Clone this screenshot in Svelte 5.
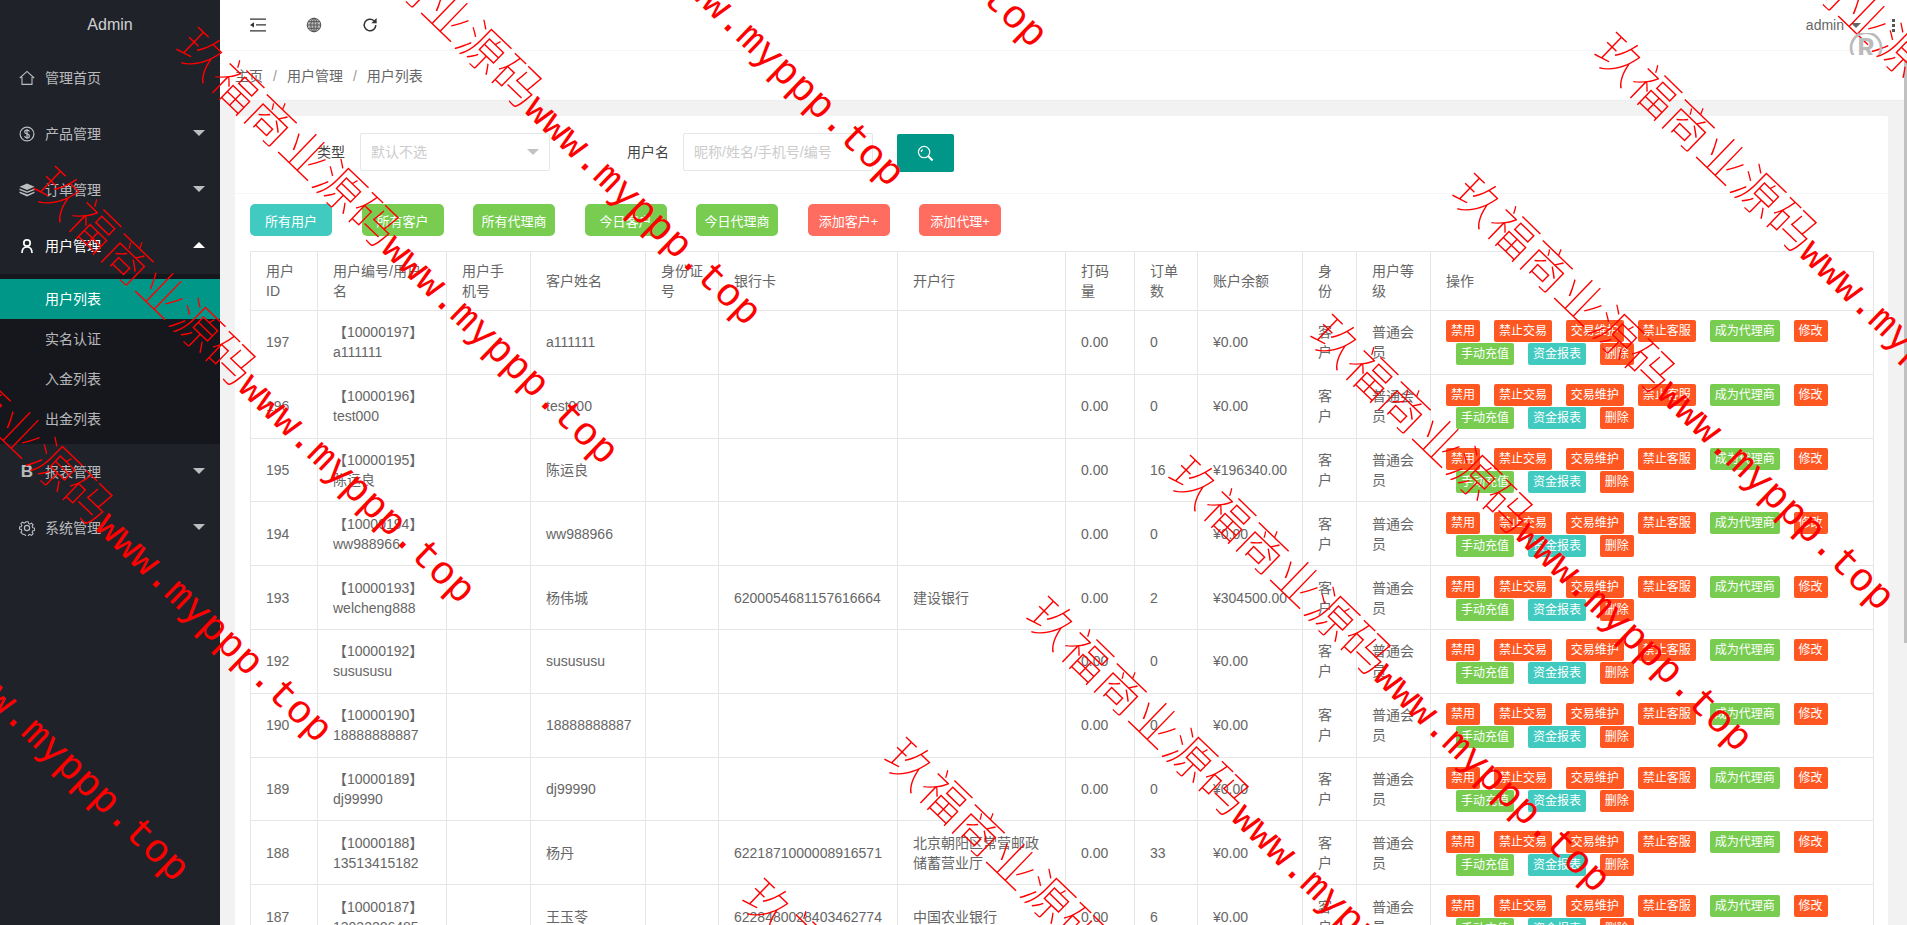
<script>
  const sideMenu = [
    { name: "管理首页", icon: "home" },
    { name: "产品管理", icon: "dollar", arrow: "down" },
    { name: "订单管理", icon: "layers", arrow: "down" },
    { name: "用户管理", icon: "user", arrow: "up", open: true },
    { name: "报表管理", icon: "bold", arrow: "down" },
    { name: "系统管理", icon: "gear", arrow: "down" },
  ];
  const subMenu = ["用户列表", "实名认证", "入金列表", "出金列表"];

  const filters = [
    { label: "所有用户", tone: "mint" },
    { label: "所有客户", tone: "green" },
    { label: "所有代理商", tone: "green" },
    { label: "今日客户", tone: "green" },
    { label: "今日代理商", tone: "green" },
    { label: "添加客户+", tone: "coral" },
    { label: "添加代理+", tone: "coral" },
  ];

  const headers = [
    ["用户ID", 67],
    ["用户编号/用户名", 129],
    ["用户手机号", 84],
    ["客户姓名", 115],
    ["身份证号", 73],
    ["银行卡", 179],
    ["开户行", 168],
    ["打码量", 69],
    ["订单数", 63],
    ["账户余额", 105],
    ["身份", 54],
    ["用户等级", 74],
    ["操作", 443],
  ];

  const users = [
    { id: 197, code: "10000197", login: "a111111", name: "a111111", card: "", bank: "", orders: 0, balance: "0.00" },
    { id: 196, code: "10000196", login: "test000", name: "test000", card: "", bank: "", orders: 0, balance: "0.00" },
    { id: 195, code: "10000195", login: "陈运良", name: "陈运良", card: "", bank: "", orders: 16, balance: "196340.00" },
    { id: 194, code: "10000194", login: "ww988966", name: "ww988966", card: "", bank: "", orders: 0, balance: "0.00" },
    { id: 193, code: "10000193", login: "welcheng888", name: "杨伟城", card: "6200054681157616664", bank: "建设银行", orders: 2, balance: "304500.00" },
    { id: 192, code: "10000192", login: "susususu", name: "susususu", card: "", bank: "", orders: 0, balance: "0.00" },
    { id: 190, code: "10000190", login: "18888888887", name: "18888888887", card: "", bank: "", orders: 0, balance: "0.00" },
    { id: 189, code: "10000189", login: "dj99990", name: "dj99990", card: "", bank: "", orders: 0, balance: "0.00" },
    { id: 188, code: "10000188", login: "13513415182", name: "杨丹", card: "6221871000008916571", bank: "北京朝阳区常营邮政储蓄营业厅", orders: 33, balance: "0.00" },
    { id: 187, code: "10000187", login: "13032206485", name: "王玉苓", card: "6228480028403462774", bank: "中国农业银行", orders: 6, balance: "0.00" },
  ];

  const actions = [
    { label: "禁用", tone: "orange" },
    { label: "禁止交易", tone: "orange" },
    { label: "交易维护", tone: "orange" },
    { label: "禁止客服", tone: "orange" },
    { label: "成为代理商", tone: "green" },
    { label: "修改", tone: "orange" },
    { label: "手动充值", tone: "green" },
    { label: "资金报表", tone: "mint" },
    { label: "删除", tone: "orange" },
  ];

  // watermark tiles repeat on a diagonal grid
  const marks = [];
  for (let i = -3; i < 5; i++) {
    marks.push({ x: 200 - i * 143, y: 50 + i * 139 });
  }
  for (let i = -2; i < 7; i++) {
    marks.push({ x: 1618 - i * 142, y: 55 + i * 141 });
  }
</script>

<div class="page">
  <aside class="side">
    <div class="logo">Admin</div>
    <ul class="menu">
      {#each sideMenu as item}
        <li class:open={item.open}>
          <div class="menu-row">
            <span class="menu-icon">
              {#if item.icon === "home"}
                <svg viewBox="0 0 16 16" width="16" height="16" fill="none" stroke="currentColor" stroke-width="1.1"><path d="M.8 8 8 1.4 15.2 8M3 7v7.400h10V7" /></svg>
              {:else if item.icon === "dollar"}
                <svg viewBox="0 0 16 16" width="16" height="16" fill="none" stroke="currentColor" stroke-width="1.2"><circle cx="8" cy="8" r="6.900" /><path d="M10.400 5.600C10 4.500 9 4.200 8 4.200c-1.300 0-2.300.7-2.300 1.800 0 2.500 4.700 1.300 4.700 3.900 0 1.100-1 1.900-2.400 1.900-1.200 0-2.200-.5-2.500-1.600M8 2.900v10.200" /></svg>
              {:else if item.icon === "layers"}
                <svg viewBox="0 0 16 16" width="16" height="16" fill="currentColor"><path d="M8 1.500 15.500 4.800 8 8 .5 4.800zM.5 6.500 8 9.600l7.500-3.100v1.500L8 11.100.5 8zm0 3 8 3.100 7-3.100V11L8 14.500.5 11z" /></svg>
              {:else if item.icon === "user"}
                <svg viewBox="0 0 16 16" width="16" height="16" fill="none" stroke="currentColor" stroke-width="1.700"><circle cx="8" cy="5" r="3.200" /><path d="M3 15c0-3.500 1.800-6 5-6s5 2.500 5 6" /></svg>
              {:else if item.icon === "bold"}
                <b class="bold-icon">B</b>
              {:else}
                <svg viewBox="0 0 16 16" width="16" height="16" fill="none" stroke="currentColor" stroke-width="1.200"><circle cx="8" cy="8" r="2.600" /><path d="M6.700 1h2.600l.4 2 1.500.7 1.800-1.100 1.800 1.800-1.100 1.800.7 1.500 2 .4v2.600l-2 .4-.7 1.500 1.100 1.800-1.800 1.800-1.800-1.100-1.500.7-.4 2H6.700l-.4-2-1.500-.7L3 14.600l-1.800-1.800 1.100-1.800-.7-1.500-2-.4V6.900l2-.4.7-1.500L1.200 3.200 3 1.400l1.800 1.100 1.500-.7z" transform="translate(.8 .8) scale(.9)" /></svg>
              {/if}
            </span>
            <span>{item.name}</span>
            {#if item.arrow}
              <i class="caret {item.arrow}"></i>
            {/if}
          </div>
          {#if item.open}
            <dl class="submenu">
              {#each subMenu as sub, i}
                <dd class:active={i === 0}>{sub}</dd>
              {/each}
            </dl>
          {/if}
        </li>
      {/each}
    </ul>
  </aside>

  <main class="main">
    <header class="topbar">
      <div class="tools">
        <svg viewBox="0 0 16 16" width="16" height="16" fill="#333"><path d="M0 1.500h16v1.300H0zM6 7.300h10v1.300H6zM0 13.200h16v1.300H0zM4 5.300v5.300L0 8z" /></svg>
        <svg viewBox="0 0 16 16" width="16" height="16" fill="#bbb" stroke="#555" stroke-width="1"><circle cx="8" cy="8" r="6.800" /><ellipse cx="8" cy="8" rx="3.200" ry="6.800" fill="none" /><path d="M8 1.200v13.600M1.200 8h13.600M2.200 4.700h11.600M2.200 11.300h11.600" /></svg>
        <svg viewBox="0 0 16 16" width="16" height="16" fill="none" stroke="#333" stroke-width="1.500"><path d="M13.800 8a5.800 5.800 0 1 1-1.800-4.200L14 5.700" /><path d="M14.600 1v5.300H9.300" fill="#333" stroke="none" /></svg>
      </div>
      <div class="account">
        <span>admin</span>
        <i class="caret-user"></i>
        <span class="dots"><i></i><i></i><i></i></span>
      </div>
      <div class="reg-mark">®</div>
    </header>

    <nav class="crumb">
      <span>主页</span><i>/</i><span>用户管理</span><i>/</i><span>用户列表</span>
    </nav>

    <section class="body">
      <div class="card">
        <form class="search">
          <span class="field-label type-label">类型</span>
          <div class="input select">默认不选<i class="caret-select"></i></div>
          <span class="field-label name-label">用户名</span>
          <div class="input">昵称/姓名/手机号/编号</div>
          <button type="button" class="search-btn" aria-label="搜索">
            <svg viewBox="0 0 18 18" width="17" height="17" fill="none" stroke="#fff" stroke-width="1.300"><circle cx="7.500" cy="7.500" r="6" /><path d="M4.500 7.500a3 3 0 0 1 1.500-2.600" /><path d="m12 12 4.500 4.500" stroke-width="2.200" /></svg>
          </button>
        </form>

        <div class="card-body">
          <div class="filters">
            {#each filters as f}
              <button type="button" class="filter {f.tone}">{f.label}</button>
            {/each}
          </div>

          <table>
            <colgroup>
              {#each headers as h}
                <col style={`width: ${h[1]}px`} />
              {/each}
            </colgroup>
            <thead>
              <tr>
                {#each headers as h}
                  <th>{h[0]}</th>
                {/each}
              </tr>
            </thead>
            <tbody>
              {#each users as u}
                <tr>
                  <td>{u.id}</td>
                  <td>【{u.code}】<br />{u.login}</td>
                  <td></td>
                  <td>{u.name}</td>
                  <td></td>
                  <td>{u.card}</td>
                  <td>{u.bank}</td>
                  <td>0.00</td>
                  <td>{u.orders}</td>
                  <td>¥{u.balance}</td>
                  <td>客户</td>
                  <td>普通会员</td>
                  <td class="ops">
                    {#each actions as a}
                      <span class="tag {a.tone}">{a.label}</span>{" "}
                    {/each}
                  </td>
                </tr>
              {/each}
            </tbody>
          </table>
        </div>
      </div>
    </section>
  </main>

  <div class="scrollbar"></div>

  <div class="watermarks" aria-hidden="true">
    {#each marks as m}
      <span class="mark" style={`left: ${m.x}px; top: ${m.y}px`}><span class="mark-cn">玖福商业源码</span>www.myppp.top</span>
    {/each}
  </div>
</div>

<style>
  :global(body) {
    margin: 0;
    overflow: hidden;
  }

  .page {
    position: relative;
    display: flex;
    width: 1907px;
    height: 925px;
    overflow: hidden;
    background: #f2f2f2;
    color: #666;
    font: 14px/20px "Liberation Sans", "Noto Sans CJK SC", sans-serif;
  }

  .side {
    flex: 0 0 220px;
    background: #20222a;
    color: rgba(255, 255, 255, 0.7);
  }

  .logo {
    height: 50px;
    line-height: 49px;
    text-align: center;
    font-size: 16px;
    color: rgba(255, 255, 255, 0.8);
  }

  .menu {
    margin: 0;
    padding: 0;
    list-style: none;
  }

  .menu-row {
    position: relative;
    display: flex;
    align-items: center;
    height: 56px;
    padding-left: 19px;
  }

  .open .menu-row {
    color: #fff;
  }

  .menu-icon {
    display: flex;
    justify-content: center;
    width: 16px;
    margin-right: 10px;
  }

  .menu-icon svg {
    flex: none;
  }

  .bold-icon {
    font-size: 17px;
    line-height: 16px;
  }

  .caret {
    position: absolute;
    right: 15px;
    top: 24px;
    border: 6px solid transparent;
    border-bottom: 0;
    border-top-color: rgba(255, 255, 255, 0.7);
  }

  .caret.up {
    border-top: 0;
    border-bottom: 6px solid #fff;
  }

  .submenu {
    margin: 0;
    padding: 5px 0;
    background: rgba(0, 0, 0, 0.3);
  }

  .submenu dd {
    height: 40px;
    margin: 0;
    padding-left: 45px;
    line-height: 40px;
  }

  .submenu dd.active {
    background: #009688;
    color: #fff;
  }

  .main {
    flex: 1;
    min-width: 0;
    position: relative;
  }

  .topbar {
    position: relative;
    display: flex;
    justify-content: space-between;
    align-items: center;
    height: 50px;
    background: #fff;
    border-bottom: 1px solid #f6f6f6;
  }

  .tools {
    display: flex;
    gap: 40px;
    padding-left: 30px;
  }

  .account {
    display: flex;
    align-items: center;
    padding-right: 12px;
    font-size: 14px;
  }

  .caret-user {
    margin: 0 31px 0 7px;
    border: 5px solid transparent;
    border-bottom: 0;
    border-top-color: #666;
  }

  .dots {
    display: flex;
    flex-direction: column;
    gap: 2px;
  }

  .dots i {
    width: 3px;
    height: 3px;
    background: #555;
  }

  .reg-mark {
    position: absolute;
    top: 33px;
    left: 1629px;
    width: 40px;
    height: 22px;
    overflow: hidden;
    color: #bbb;
    font: bold 46px/30px "Liberation Sans", sans-serif;
    z-index: 1;
  }

  .crumb {
    display: flex;
    align-items: center;
    height: 49px;
    margin-right: 3px;
    padding-left: 15px;
    background: #fff;
    border-bottom: 1px solid #eee;
  }

  .crumb i {
    margin: 0 10px;
    color: #999;
    font-style: normal;
  }

  .body {
    padding: 15px 19px 0 15px;
  }

  .card {
    background: #fff;
    border-radius: 2px;
  }

  .search {
    display: flex;
    align-items: center;
    box-sizing: border-box;
    height: 78px;
    padding: 0 0 5px 82px;
    color: #444;
    border-bottom: 1px solid #f6f6f6;
  }

  .field-label {
    white-space: nowrap;
  }

  .type-label {
    margin-right: 15px;
  }

  .name-label {
    margin: 0 14px 0 77px;
  }

  .input {
    position: relative;
    width: 190px;
    height: 38px;
    box-sizing: border-box;
    padding-left: 10px;
    border: 1px solid #e6e6e6;
    border-radius: 2px;
    line-height: 36px;
    color: #ccc;
  }

  .caret-select {
    position: absolute;
    right: 10px;
    top: 15px;
    border: 6px solid transparent;
    border-bottom: 0;
    border-top-color: #c2c2c2;
  }

  .search-btn {
    width: 57px;
    height: 38px;
    margin: 2px 0 0 24px;
    padding: 0;
    border: 0;
    border-radius: 2px;
    background: #009688;
  }

  .search-btn svg {
    display: block;
    margin: 0 auto;
  }

  .card-body {
    padding: 10px 15px 0;
  }

  .filters {
    display: flex;
    gap: 29.5px;
    margin-bottom: 15px;
  }

  .filter {
    flex: none;
    width: 82px;
    height: 32px;
    padding: 0;
    border: 0;
    border-radius: 5px;
    color: #fff;
    font: 13px "Liberation Sans", "Noto Sans CJK SC", sans-serif;
  }

  .mint {
    background: #41cac0;
  }

  .green {
    background: #78cd51;
  }

  .coral {
    background: #ff6c60;
  }

  .orange {
    background: #ff5722;
  }

  table {
    width: 1623px;
    border-collapse: collapse;
    table-layout: fixed;
    background: #fff;
  }

  th,
  td {
    padding: 9px 15px;
    border: 1px solid #e6e6e6;
    font-weight: 400;
    text-align: left;
  }

  tbody tr {
    height: 63.8px;
  }

  .ops {
    padding-top: 9px;
    padding-bottom: 7px;
    line-height: 23px;
  }

  .tag {
    display: inline-block;
    height: 22px;
    margin-left: 10px;
    padding: 0 5px;
    border-radius: 2px;
    color: #fff;
    font-size: 12px;
    line-height: 22px;
    vertical-align: top;
  }

  .tag:first-child {
    margin-left: 0;
  }

  .scrollbar {
    position: absolute;
    top: 60px;
    right: 0;
    width: 3px;
    height: 583px;
    background: #c1c1c1;
  }

  .watermarks {
    position: absolute;
    inset: 0;
    overflow: hidden;
    pointer-events: none;
  }

  .mark {
    position: absolute;
    color: #f00;
    font: 40px/48px "Liberation Mono", monospace;
    white-space: nowrap;
    transform-origin: 0 50%;
    transform: translate(-17px, -41px) rotate(44deg);
  }

  .mark-cn {
    font-family: "Noto Sans CJK SC", sans-serif;
    font-size: 48px;
    font-weight: 100;
  }
</style>
